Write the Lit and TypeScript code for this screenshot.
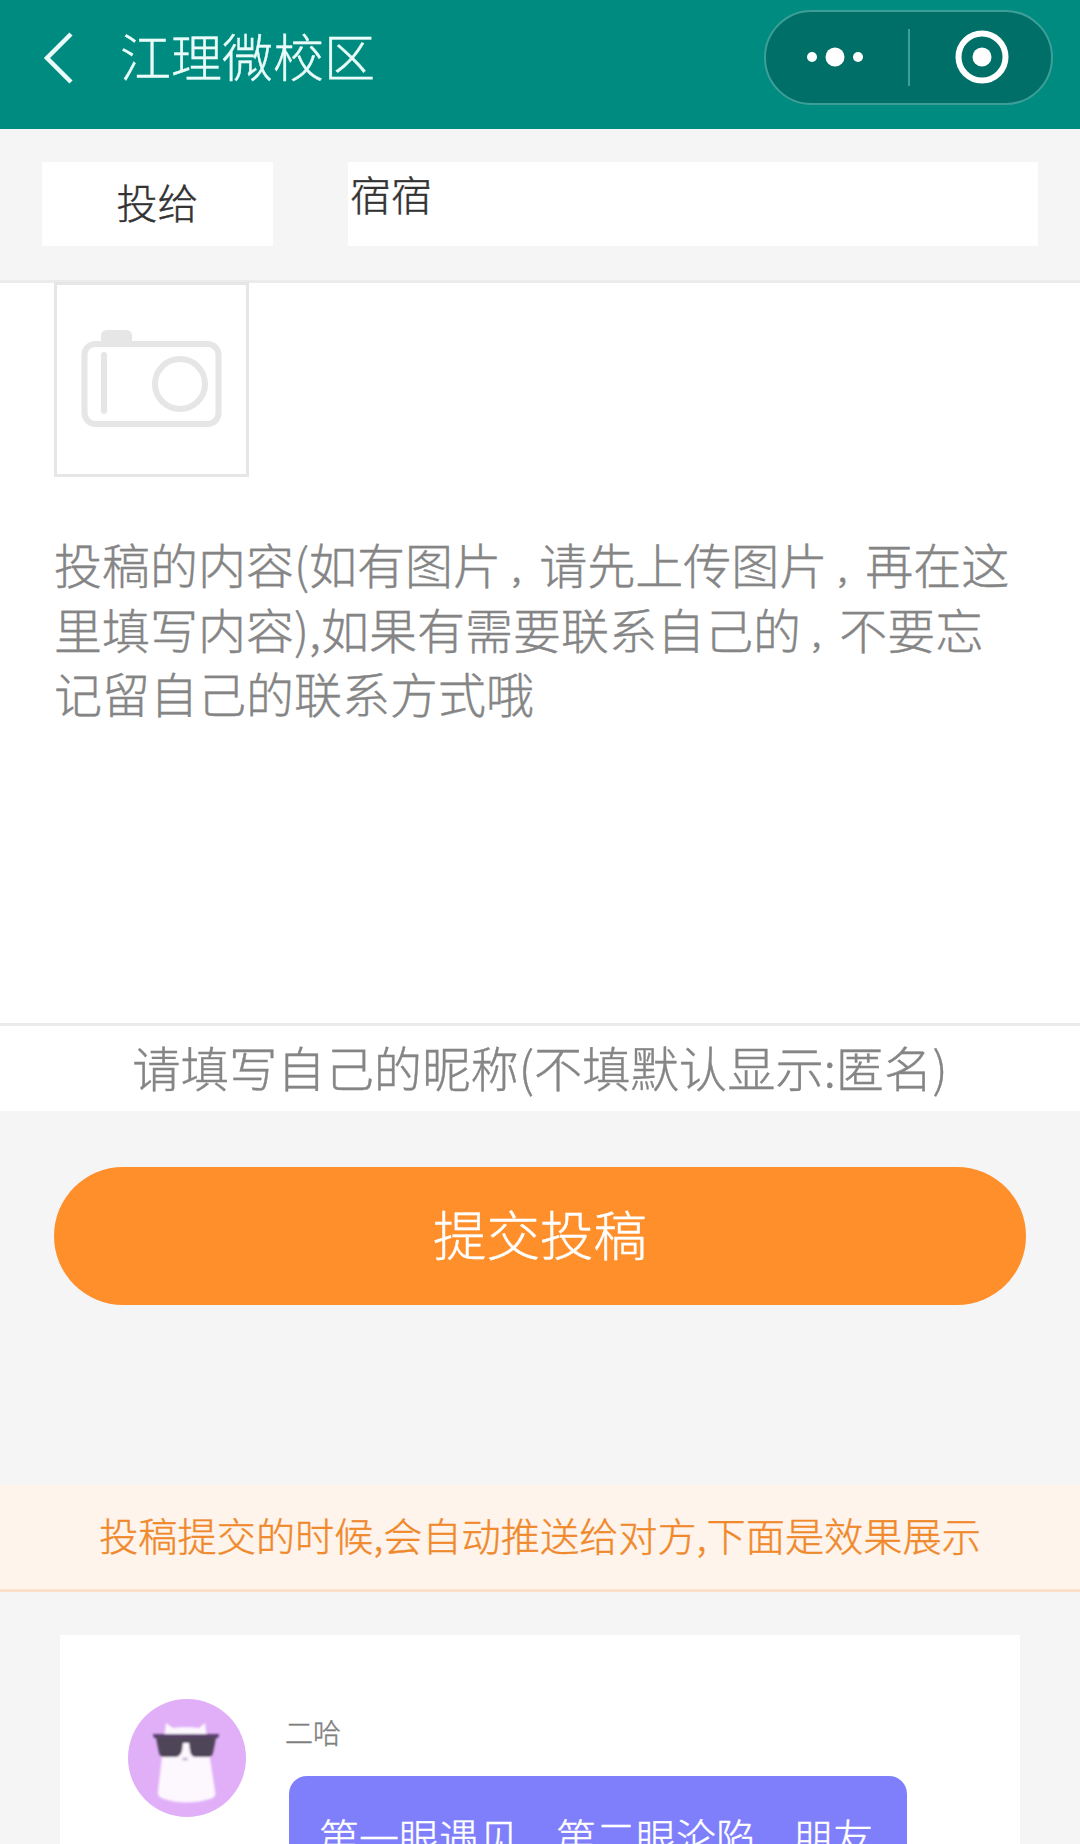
import { LitElement, html, css, svg } from "lit";
import { customElement } from "lit/decorators.js";

@customElement("app-root")
export class AppRoot extends LitElement {
  static styles = css`
    :host {
      display: block;
      width: 1080px;
      height: 1844px;
      overflow: hidden;
      background: #f5f5f5;
      font-family: "Noto Sans CJK SC", "Liberation Sans", sans-serif;
      font-weight: 300;
      -webkit-text-stroke: 0.4px currentColor;
    }
    .nav {
      height: 129px;
      background: #008b80;
      display: flex;
      align-items: center;
      color: #eafcf9;
    }
    .back { margin: -14px 0 0 43px; width: 32px; height: 54px; display: block; flex: none; }
    .nav-title { margin-left: 45px; font-size: 51px; line-height: 1; position: relative; top: -9px; white-space: nowrap; }
    .capsule {
      margin: -15px 27px 0 auto;
      width: 289px;
      height: 95px;
      box-sizing: border-box;
      border: 2px solid #3e9f97;
      border-radius: 48px;
      background: #006f68;
      display: flex;
      align-items: center;
    }
    .dots { width: 142px; box-sizing: border-box; padding-left: 41px; flex: none; }
    .divider { width: 2px; height: 57px; background: #3e9f97; flex: none; }
    .dots svg, .target svg { display: block; }
    .target { margin-left: 45px; }
    .to-row {
      height: 154px;
      box-sizing: border-box;
      padding: 33px 42px 0;
      display: flex;
      border-bottom: 3px solid #ebebeb;
    }
    .to-label {
      width: 231px;
      height: 84px;
      background: #fff;
      font-size: 41px;
      line-height: 78px;
      text-align: center;
      color: #333;
    }
    .to-value {
      margin-left: 75px;
      width: 690px;
      height: 84px;
      background: #fff;
      font-size: 41px;
      line-height: 62px;
      color: #333;
      padding-left: 2px;
      box-sizing: border-box;
    }
    .compose {
      height: 743px;
      box-sizing: border-box;
      background: #fff;
      border-bottom: 3px solid #ebebeb;
    }
    .photo {
      margin-left: 54px;
      position: relative;
      top: -1px;
      width: 195px;
      height: 195px;
      box-sizing: border-box;
      border: 3px solid #e6e6e6;
    }
    .photo svg { display: block; }
    .placeholder {
      margin: 53px 0 0 54px;
      width: 960px;
      font-size: 48px;
      line-height: 64.5px;
      color: #858585;
    }
    .placeholder .comma { margin-left: 8px; font-size: 30px; font-weight: 400; line-height: 0; }
    .nick {
      height: 85px;
      background: #fff;
      font-size: 48.3px;
      line-height: 80px;
      text-align: center;
      color: #858585;
      white-space: nowrap;
    }
    .submit-wrap { padding: 56px 54px 0; }
    .submit {
      height: 138px;
      border-radius: 69px;
      background: #ff8f2a;
      color: #fff;
      font-size: 53.5px;
      line-height: 132px;
      text-align: center;
    }
    .notice {
      margin-top: 180px;
      height: 107px;
      box-sizing: border-box;
      background: #fef4eb;
      border-bottom: 3px solid #fbdfc8;
      color: #f0892c;
      font-size: 39.2px;
      line-height: 99px;
      text-align: center;
      white-space: nowrap;
    }
    .card {
      margin: 43px 60px 0;
      height: 300px;
      background: #fff;
      display: flex;
      padding: 64px 0 0 68px;
      box-sizing: border-box;
    }
    .avatar { width: 118px; height: 118px; flex: none; display: block; }
    .msg { margin-left: 39px; }
    .name { font-size: 28px; line-height: 40px; color: #808080; margin-top: 13px; }
    .bubble {
      margin: 24px 0 0 4px;
      width: 618px;
      height: 200px;
      box-sizing: border-box;
      padding: 32px 30px;
      border-radius: 18px;
      background: #7f7ffc;
      color: #fff;
      font-size: 40px;
      line-height: 56px;
      white-space: nowrap;
    }
    .bubble .comma { margin-left: 7px; font-size: 30px; font-weight: 400; line-height: 0; }
  `;

  private back() {
    return svg`<svg class="back" viewBox="0 0 32 54" fill="none" stroke="#eafcf9" stroke-width="4.5"><path d="M28 3 L4 27 L28 51"/></svg>`;
  }

  private camera() {
    return svg`<svg width="189" height="189" viewBox="0 0 189 189" fill="none">
      <path d="M44 58 v-7 q0-6 6-6 h19 q6 0 6 6 v9 h-31z" fill="#e6e6e6"/>
      <rect x="27.5" y="59" width="134" height="80" rx="11" stroke="#e6e6e6" stroke-width="6"/>
      <rect x="44" y="67" width="6" height="62" rx="3" fill="#e6e6e6"/>
      <circle cx="123" cy="99" r="25" stroke="#e6e6e6" stroke-width="6"/>
    </svg>`;
  }

  private cat() {
    return svg`<svg class="avatar" viewBox="0 0 118 118">
      <defs><filter id="soft"><feGaussianBlur stdDeviation="0.9"/></filter></defs>
      <circle cx="59" cy="59" r="59" fill="#e0aff8"/>
      <g filter="url(#soft)">
        <path d="M38 24 L45 29 Q58 27 71 29 L77 24 L79 40 L87 92 Q89 98 82 100 Q58 107 36 100 Q29 98 30 92 L36 40Z" fill="#fdf8fe"/>
        <path d="M25 35 H91 L90 39 H88 L85 54 Q84 58 80 58 H68 Q63 58 62 52 L61 44 H55 L54 52 Q52 58 47 58 H36 Q32 58 31 54 L28 39 H26Z" fill="#4f4558"/>
        <path d="M25 35 H91 L90 38 H26Z" fill="#5b3f72"/>
        <ellipse cx="57" cy="60" rx="3" ry="1.5" fill="#c9b9d0"/>
      </g>
    </svg>`;
  }

  render() {
    return html`
      <div class="nav">
        ${this.back()}
        <div class="nav-title">江理微校区</div>
        <div class="capsule">
          <div class="dots">
            <svg width="58" height="20" viewBox="0 0 58 20" fill="#fff"><circle cx="5" cy="10" r="5"/><circle cx="28" cy="10" r="9.5"/><circle cx="51" cy="10" r="5"/></svg>
          </div>
          <div class="divider"></div>
          <div class="target">
            <svg width="54" height="54" viewBox="0 0 54 54" fill="none"><circle cx="27" cy="27" r="23.5" stroke="#fff" stroke-width="6"/><circle cx="27" cy="27" r="9.5" fill="#fff"/></svg>
          </div>
        </div>
      </div>
      <div class="to-row">
        <div class="to-label">投给</div>
        <div class="to-value">宿宿</div>
      </div>
      <div class="compose">
        <div class="photo">${this.camera()}</div>
        <div class="placeholder">投稿的内容(如有图片<span class="comma">，</span>请先上传图片<span class="comma">，</span>再在这里填写内容),如果有需要联系自己的<span class="comma">，</span>不要忘记留自己的联系方式哦</div>
      </div>
      <div class="nick">请填写自己的昵称(不填默认显示:匿名)</div>
      <div class="submit-wrap"><div class="submit">提交投稿</div></div>
      <div class="notice">投稿提交的时候,会自动推送给对方,下面是效果展示</div>
      <div class="card">
        ${this.cat()}
        <div class="msg">
          <div class="name">二哈</div>
          <div class="bubble">第一眼遇见<span class="comma">，</span>第二眼沦陷<span class="comma">，</span>朋友</div>
        </div>
      </div>
    `;
  }
}
